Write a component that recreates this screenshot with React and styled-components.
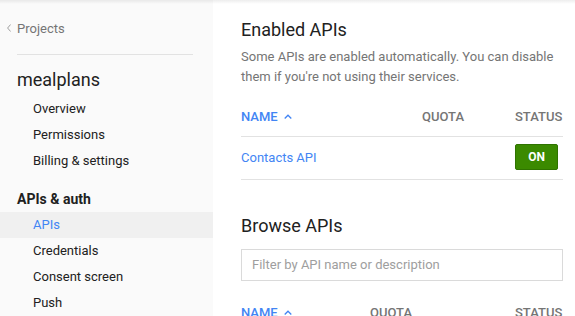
import React from "react";
import styled, { createGlobalStyle } from "styled-components";

const GlobalStyle = createGlobalStyle`
  html, body {
    margin: 0;
    padding: 0;
    background: #ffffff;
    font-family: Roboto, "Liberation Sans", Arial, sans-serif;
    -webkit-font-smoothing: antialiased;
  }
`;

const Layout = styled.div`
  position: relative;
  display: flex;
  width: 575px;
  height: 316px;
  overflow: hidden;

  &::before {
    content: "";
    position: absolute;
    left: 0;
    right: 0;
    top: 0;
    height: 4px;
    background: linear-gradient(rgba(0, 0, 0, 0.07), rgba(0, 0, 0, 0));
    pointer-events: none;
  }
`;

const Sidebar = styled.nav`
  width: 213px;
  flex-shrink: 0;
  background: #fafafa;
  padding-top: 15px;
  box-sizing: border-box;
`;

const BackLink = styled.a`
  display: flex;
  align-items: center;
  height: 26px;
  padding-left: 7px;
  color: #757575;
  font-size: 13px;
  text-decoration: none;

  svg {
    margin-right: 6px;
  }
`;

const Divider = styled.div`
  height: 1px;
  margin: 13px 20px 0 17px;
  background: #e2e2e2;
`;

const ProjectName = styled.div`
  margin-top: 12px;
  padding-left: 17px;
  line-height: 26px;
  font-size: 18px;
  color: #212121;
`;

const NavList = styled.div`
  display: flex;
  flex-direction: column;
  margin-top: ${(p) => p.$gap || 0}px;
`;

const NavItem = styled.a`
  display: block;
  height: 26px;
  line-height: 26px;
  padding-left: 33px;
  font-size: 13px;
  color: ${(p) => (p.$active ? "#4285f4" : "#212121")};
  background: ${(p) => (p.$active ? "#f0f0f0" : "transparent")};
  text-decoration: none;
`;

const SectionTitle = styled.div`
  margin-top: 12px;
  padding-left: 17px;
  line-height: 26px;
  font-size: 14px;
  font-weight: 700;
  color: #212121;
`;

const Main = styled.main`
  flex: 1;
  padding: 17px 0 0 28px;
`;

const Content = styled.div`
  width: 322px;
`;

const Heading = styled.h2`
  margin: ${(p) => p.$top || 0}px 0 0;
  font-size: 18px;
  font-weight: 400;
  line-height: 26px;
  color: #212121;
`;

const Description = styled.p`
  margin: 4px 0 0;
  font-size: 13px;
  line-height: 20px;
  color: #757575;
`;

const Row = styled.div`
  display: grid;
  grid-template-columns: ${(p) => p.$cols};
  align-items: center;
  border-bottom: ${(p) => (p.$noBorder ? "none" : "1px solid #e2e2e2")};
`;

const HeadRow = styled(Row)`
  height: 40px;
  margin-top: ${(p) => p.$top}px;
  padding-bottom: ${(p) => (p.$noBorder ? 0 : 1)}px;
  box-sizing: border-box;
`;

const BodyRow = styled(Row)`
  padding: 7px 0 9px;
`;

const HeadCell = styled.div`
  display: flex;
  align-items: center;
  gap: 6px;
  font-size: 13px;
  font-weight: 500;
  color: ${(p) => (p.$sorted ? "#4285f4" : "#757575")};
`;

const ApiLink = styled.a`
  font-size: 13px;
  color: #4285f4;
  text-decoration: none;
`;

const StatusButton = styled.button`
  width: 43px;
  height: 26px;
  padding: 0;
  border: 1px solid #2f7300;
  border-radius: 2px;
  background: #3b8a00;
  color: #ffffff;
  font-family: inherit;
  font-size: 12px;
  font-weight: 700;
`;

const Filter = styled.input`
  display: block;
  box-sizing: border-box;
  width: 322px;
  height: 32px;
  margin-top: 10px;
  padding: 0 10px 1px;
  border: 1px solid #dadada;
  border-radius: 0;
  font-family: inherit;
  font-size: 13px;
  color: #212121;
  outline: none;

  &::placeholder {
    color: #9e9e9e;
  }
`;

const ChevronLeft = () => (
  <svg width="4" height="8" viewBox="0 0 4 8">
    <path d="M3.6 0.5 L0.6 4 L3.6 7.5" fill="none" stroke="#9e9e9e" strokeWidth="1" />
  </svg>
);

const ChevronUp = () => (
  <svg width="8" height="5" viewBox="0 0 8 5">
    <path d="M0.7 4.5 L4 1.2 L7.3 4.5" fill="none" stroke="#4285f4" strokeWidth="1.3" />
  </svg>
);

function TableHead({ cols, top, border }) {
  return (
    <HeadRow $cols={cols} $top={top} $noBorder={!border}>
      <HeadCell $sorted>
        NAME <ChevronUp />
      </HeadCell>
      <HeadCell>QUOTA</HeadCell>
      <HeadCell>STATUS</HeadCell>
    </HeadRow>
  );
}

export default function App() {
  const enabledCols = "181px 93px 48px";
  const browseCols = "129px 145px 48px";

  return (
    <>
      <GlobalStyle />
      <Layout>
        <Sidebar>
          <BackLink href="#">
            <ChevronLeft />
            Projects
          </BackLink>
          <Divider />
          <ProjectName>mealplans</ProjectName>
          <NavList $gap={3}>
            <NavItem href="#">Overview</NavItem>
            <NavItem href="#">Permissions</NavItem>
            <NavItem href="#">Billing &amp; settings</NavItem>
          </NavList>
          <SectionTitle>APIs &amp; auth</SectionTitle>
          <NavList>
            <NavItem href="#" $active>
              APIs
            </NavItem>
            <NavItem href="#">Credentials</NavItem>
            <NavItem href="#">Consent screen</NavItem>
            <NavItem href="#">Push</NavItem>
          </NavList>
        </Sidebar>
        <Main>
          <Content>
            <Heading>Enabled APIs</Heading>
            <Description>
              Some APIs are enabled automatically. You can disable them if you're not using their
              services.
            </Description>
            <TableHead cols={enabledCols} top={10} border />
            <BodyRow $cols={enabledCols}>
              <ApiLink href="#">Contacts API</ApiLink>
              <div />
              <StatusButton>ON</StatusButton>
            </BodyRow>
            <Heading $top={33}>Browse APIs</Heading>
            <Filter placeholder="Filter by API name or description" />
            <TableHead cols={browseCols} top={11} />
          </Content>
        </Main>
      </Layout>
    </>
  );
}
